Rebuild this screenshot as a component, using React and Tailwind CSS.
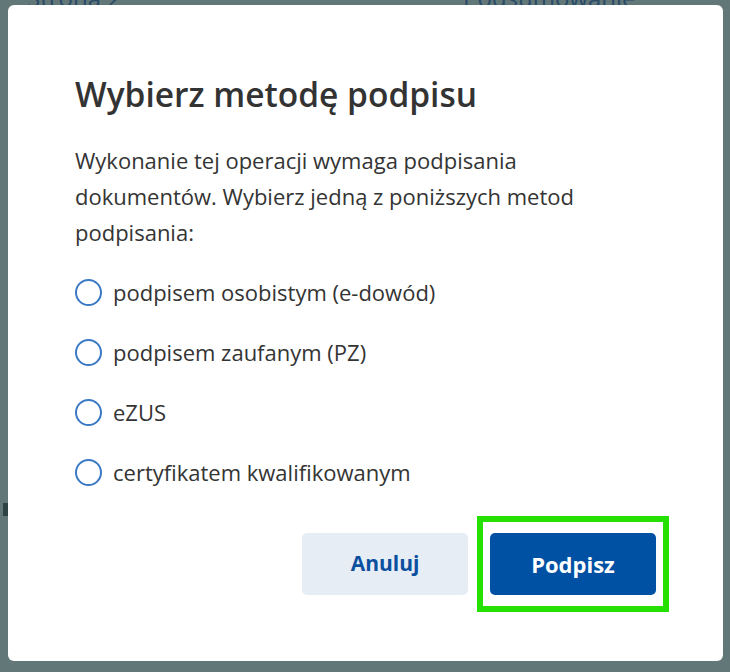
import React from 'react';

const options = [
  'podpisem osobistym (e-dowód)',
  'podpisem zaufanym (PZ)',
  'eZUS',
  'certyfikatem kwalifikowanym',
];

function Radio({ label }) {
  return (
    <label className="flex items-center h-[60px] gap-[11px] cursor-pointer">
      <span className="w-[27px] h-[27px] rounded-full border-2 border-[#3a79c6] bg-white shrink-0" />
      <span className="text-[22px] text-[#343434]">{label}</span>
    </label>
  );
}

export default function App() {
  return (
    <div className="relative w-[730px] h-[672px] overflow-hidden bg-[#627878]" style={{ fontFamily: '"Open Sans", "Liberation Sans", sans-serif' }}>
      {/* page behind the overlay */}
      <div className="absolute left-[27px] top-[-20px] text-[24px] text-[#294a68]">Strona 2</div>
      <div className="absolute left-[463px] top-[-20px] text-[24px] text-[#294a68]">Podsumowanie</div>
      <div className="absolute left-[3px] top-[503px] w-[5px] h-[13px] bg-[#2e4444]" />

      {/* dialog */}
      <div className="absolute left-[8px] top-[5px] w-[715px] h-[656px] bg-white rounded-[6px] px-[67px] pt-[69px]">
        <h2 className="text-[33.5px] leading-[40px] font-semibold text-[#333333]">Wybierz metodę podpisu</h2>
        <p className="mt-[28px] max-w-[525px] text-[22px] leading-[36px] text-[#343434]">
          Wykonanie tej operacji wymaga podpisania dokumentów. Wybierz jedną z poniższych metod podpisania:
        </p>
        <div className="mt-[12px] flex flex-col">
          {options.map((o) => (
            <Radio key={o} label={o} />
          ))}
        </div>
        <div className="mt-[14px] flex justify-end items-center gap-[9px] -mr-[13px]">
          <button className="w-[166px] h-[62px] rounded-[5px] bg-[#e6edf5] text-[#0b4f9f] text-[21px] font-bold">Anuluj</button>
          <div className="border-[6px] border-[#25e000] px-[7px] py-[11px]">
            <button className="w-[166px] h-[62px] rounded-[5px] bg-[#0050a3] text-white text-[22px] font-bold">Podpisz</button>
          </div>
        </div>
      </div>
    </div>
  );
}
